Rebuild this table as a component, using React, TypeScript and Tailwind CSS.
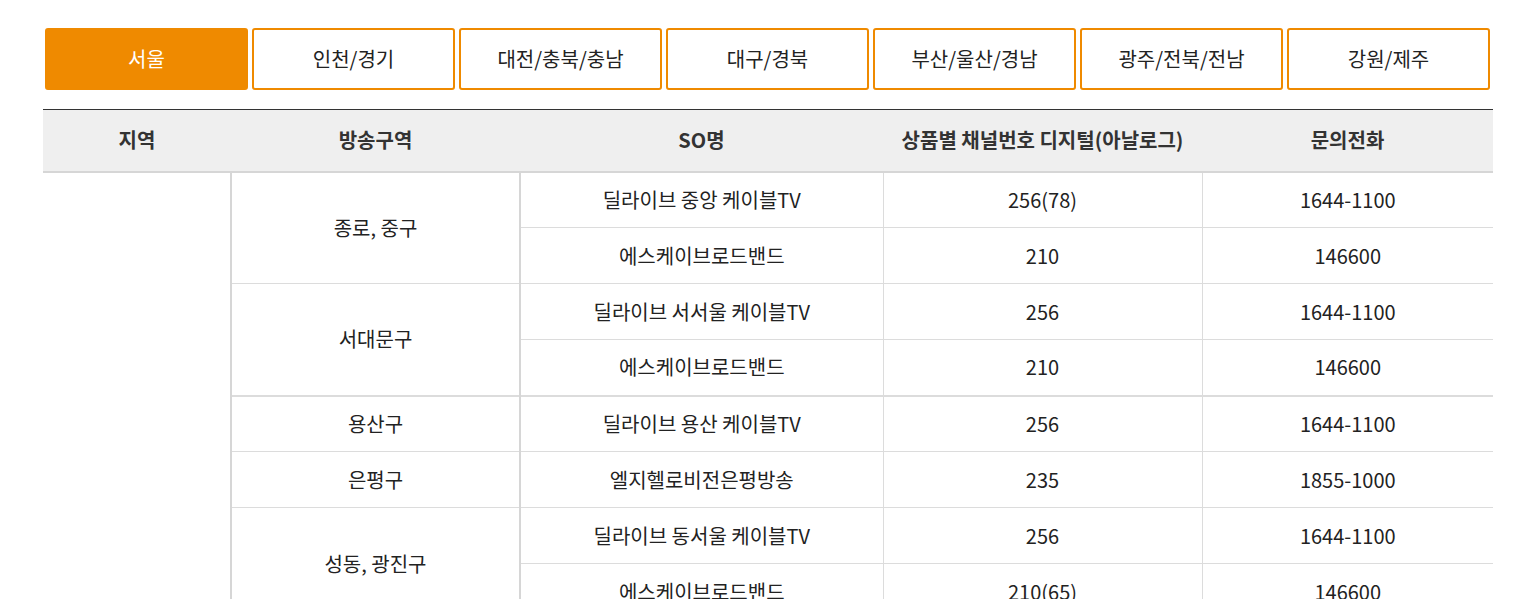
import React from "react";

const tabs = ["서울", "인천/경기", "대전/충북/충남", "대구/경북", "부산/울산/경남", "광주/전북/전남", "강원/제주"];

type Row = { so: string; ch: string; tel: string };
type Group = { area: string; rows: Row[]; thick?: boolean };

const groups: Group[] = [
  {
    area: "종로, 중구",
    rows: [
      { so: "딜라이브 중앙 케이블TV", ch: "256(78)", tel: "1644-1100" },
      { so: "에스케이브로드밴드", ch: "210", tel: "146600" },
    ],
  },
  {
    area: "서대문구",
    thick: true,
    rows: [
      { so: "딜라이브 서서울 케이블TV", ch: "256", tel: "1644-1100" },
      { so: "에스케이브로드밴드", ch: "210", tel: "146600" },
    ],
  },
  { area: "용산구", rows: [{ so: "딜라이브 용산 케이블TV", ch: "256", tel: "1644-1100" }] },
  { area: "은평구", rows: [{ so: "엘지헬로비전은평방송", ch: "235", tel: "1855-1000" }] },
  {
    area: "성동, 광진구",
    rows: [
      { so: "딜라이브 동서울 케이블TV", ch: "256", tel: "1644-1100" },
      { so: "에스케이브로드밴드", ch: "210(65)", tel: "146600" },
    ],
  },
];

export default function App() {
  const totalRows = groups.reduce((s, g) => s + g.rows.length, 0);
  return (
    <div
      className="w-[1538px] h-[599px] overflow-hidden bg-white text-[#222]"
      style={{ fontFamily: '"Noto Sans CJK KR", "Noto Sans", sans-serif' }}
    >
      <div className="pl-[45px] pr-[48px] pt-[28px] flex gap-[4px]">
        {tabs.map((t, i) => (
          <div
            key={t}
            className={
              i === 0
                ? "w-[203px] h-[62px] flex items-center justify-center rounded-[3px] border-2 border-[#ef8a00] bg-[#ef8a00] text-white text-[20px] leading-none"
                : "w-[203px] h-[62px] flex items-center justify-center rounded-[3px] border-2 border-[#ef8a00] bg-white text-[#222] text-[20px] leading-none"
            }
          >
            {t}
          </div>
        ))}
      </div>
      <div className="pl-[43px] pt-[19px]">
        <table className="w-[1450px] table-fixed border-collapse text-[20px] leading-none">
          <colgroup>
            <col className="w-[188px]" />
            <col className="w-[289px]" />
            <col className="w-[363px]" />
            <col className="w-[319px]" />
            <col className="w-[291px]" />
          </colgroup>
          <thead>
            <tr className="h-[62px] bg-[#efefef] border-t border-t-[#333] border-b-2 border-b-[#d6d6d6]">
              {["지역", "방송구역", "SO명", "상품별 채널번호 디지털(아날로그)", "문의전화"].map((h) => (
                <th key={h} className="font-bold text-[#333] text-center align-middle p-0">
                  {h}
                </th>
              ))}
            </tr>
          </thead>
          <tbody>
            {groups.map((g, gi) =>
              g.rows.map((r, ri) => (
                <tr
                  key={`${gi}-${ri}`}
                  className={
                    g.thick && ri === g.rows.length - 1
                      ? "h-[56px] border-b-2 border-b-[#dcdcdc]"
                      : "h-[56px] border-b border-b-[#dcdcdc]"
                  }
                >
                  {gi === 0 && ri === 0 && (
                    <td rowSpan={totalRows} className="border-r-2 border-r-[#d6d6d6] border-b-0 bg-white p-0"></td>
                  )}
                  {ri === 0 && (
                    <td rowSpan={g.rows.length} className="border-r-2 border-r-[#d6d6d6] text-center align-middle p-0">
                      {g.area}
                    </td>
                  )}
                  <td className="border-r border-r-[#dcdcdc] text-center align-middle p-0">{r.so}</td>
                  <td className="border-r border-r-[#dcdcdc] text-center align-middle p-0">{r.ch}</td>
                  <td className="text-center align-middle p-0">{r.tel}</td>
                </tr>
              ))
            )}
          </tbody>
        </table>
      </div>
    </div>
  );
}
